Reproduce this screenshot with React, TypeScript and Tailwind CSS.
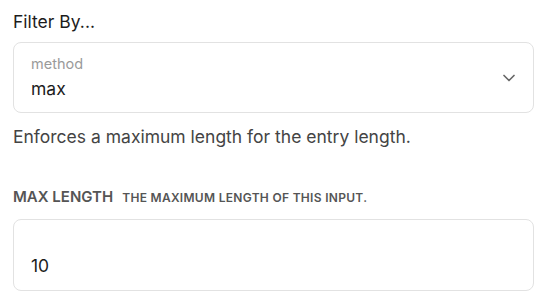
import { ChevronDown } from 'lucide-react';

const App = () => {
  return (
    <div
      className="w-[547px] h-[304px] bg-white px-[13px] pt-[10px] text-[#1c1c1c]"
      style={{ fontFamily: 'Inter, "Noto Sans", sans-serif' }}
    >
      <div className="text-[17.5px] leading-[24px]">Filter By...</div>

      {/* Select */}
      <div className="mt-[8px] w-[521px] h-[71px] rounded-[8px] border border-[#e2e2e2] flex items-center justify-between pl-[17px] pr-[14px]">
        <div className="flex flex-col">
          <span className="text-[14.5px] leading-[18px] text-[#9a9a9a]">method</span>
          <span className="text-[17.5px] leading-[24px] mt-[4px]">max</span>
        </div>
        <ChevronDown className="w-[20px] h-[20px] text-[#666]" strokeWidth={2} />
      </div>

      <p className="mt-[11.5px] text-[17.5px] leading-[24px] text-[#444]">
        Enforces a maximum length for the entry length.
      </p>

      {/* Max length field */}
      <div className="mt-[38.5px] h-[20px] flex items-baseline gap-[9px] font-semibold uppercase text-[#555]">
        <span className="text-[15px] leading-[20px]">Max Length</span>
        <span className="text-[12px] leading-[16px] tracking-[0.3px]">The maximum length of this input.</span>
      </div>

      <div className="mt-[12px] w-[521px] h-[72px] rounded-[8px] border border-[#e2e2e2] flex flex-col justify-end pl-[17px] pb-[12px]">
        <span className="text-[17.5px] leading-[24px]">10</span>
      </div>
    </div>
  );
};

export default App;
